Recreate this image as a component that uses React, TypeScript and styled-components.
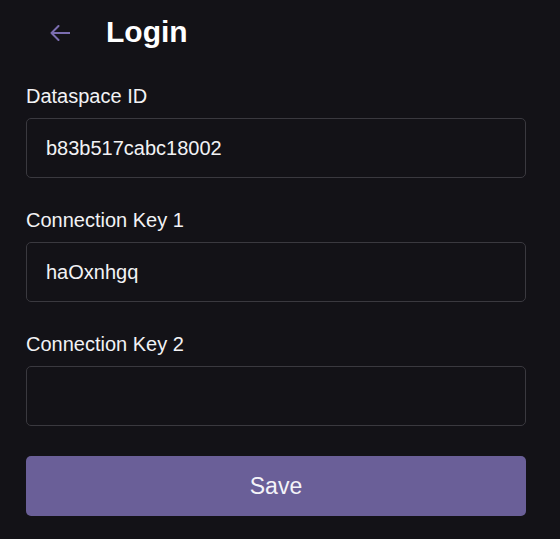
import styled, { createGlobalStyle } from "styled-components";

const GlobalStyle = createGlobalStyle`
  html, body {
    margin: 0;
    padding: 0;
    background: #131217;
  }
  body {
    font-family: "Liberation Sans", Arial, sans-serif;
    color: #f2f2f5;
  }
`;

const Page = styled.div`
  padding: 0 34px 0 26px;
  min-height: 539px;
  box-sizing: border-box;
`;

const Header = styled.header`
  height: 64px;
  display: flex;
  align-items: center;
`;

const BackButton = styled.button`
  background: none;
  border: none;
  padding: 0;
  margin: 2px 0 0 24px;
  width: 20px;
  height: 16px;
  display: flex;
  cursor: pointer;
  color: #7b6db0;
`;

const Title = styled.h1`
  margin: 0 0 0 36px;
  font-size: 30px;
  font-weight: 700;
  line-height: 34px;
  color: #ffffff;
`;

const Form = styled.form`
  display: flex;
  flex-direction: column;
  gap: 31px;
  margin-top: 21px;
`;

const Field = styled.label`
  display: flex;
  flex-direction: column;
  gap: 11px;
`;

const LabelText = styled.span`
  font-size: 20px;
  line-height: 22px;
  color: #f2f2f5;
`;

const Input = styled.input`
  height: 60px;
  box-sizing: border-box;
  padding: 0 19px;
  background: #131217;
  border: 1px solid #3a393f;
  border-radius: 5px;
  color: #f2f2f5;
  font-family: "Liberation Sans", Arial, sans-serif;
  font-size: 20px;
  outline: none;
`;

const SaveButton = styled.button`
  margin-top: -1px;
  height: 60px;
  border: none;
  border-radius: 5px;
  background: #6a5f98;
  color: #f4f3f8;
  font-family: "Liberation Sans", Arial, sans-serif;
  font-size: 23px;
  cursor: pointer;
`;

const fields = [
  { label: "Dataspace ID", value: "b83b517cabc18002" },
  { label: "Connection Key 1", value: "haOxnhgq" },
  { label: "Connection Key 2", value: "" },
];

export default function App() {
  return (
    <>
      <GlobalStyle />
      <Page>
        <Header>
          <BackButton type="button" aria-label="Back">
            <svg width="20" height="16" viewBox="0 0 20 16" fill="none">
              <path
                d="M19.5 8H1.5M8.5 1L1.5 8l7 7"
                stroke="currentColor"
                strokeWidth="2"
                strokeLinecap="round"
                strokeLinejoin="round"
              />
            </svg>
          </BackButton>
          <Title>Login</Title>
        </Header>
        <Form onSubmit={(e) => e.preventDefault()}>
          {fields.map((f) => (
            <Field key={f.label}>
              <LabelText>{f.label}</LabelText>
              <Input defaultValue={f.value} />
            </Field>
          ))}
          <SaveButton type="submit">Save</SaveButton>
        </Form>
      </Page>
    </>
  );
}
